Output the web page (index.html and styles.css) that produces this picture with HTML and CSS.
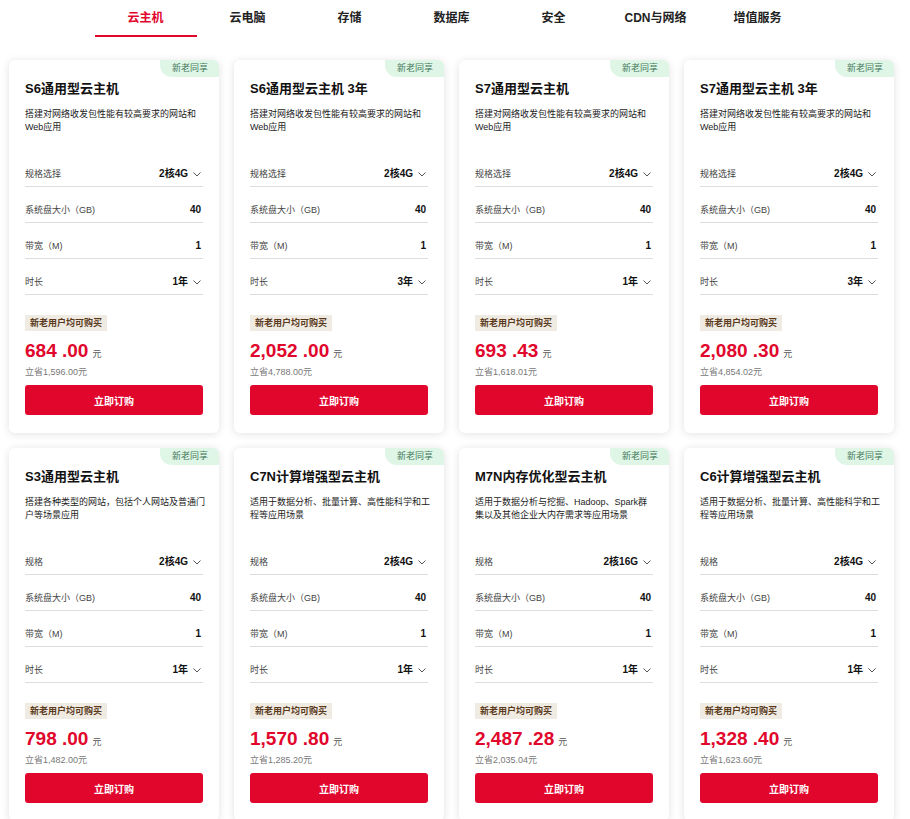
FILE: index.html
```html
<!DOCTYPE html>
<html lang="zh-CN">

<head>
    <meta charset="UTF-8">
    <meta name="viewport" content="width=device-width, initial-scale=1.0">
    <title>云主机</title>
    <link rel="stylesheet" href="styles.css">
</head>

<body>

    <div class="page">
        <div class="tabs">
            <div class="tab active">云主机</div>
            <div class="tab">云电脑</div>
            <div class="tab">存储</div>
            <div class="tab">数据库</div>
            <div class="tab">安全</div>
            <div class="tab">CDN与网络</div>
            <div class="tab">增值服务</div>
        </div>

        <div class="cards" id="cards"></div>
    </div>

    <script>
        var products = [
            { name: 'S6通用型云主机', desc: '搭建对网络收发包性能有较高要求的网站和Web应用', specLabel: '规格选择', spec: '2核4G', time: '1年', price: '684', cents: '.00', save: '1,596.00' },
            { name: 'S6通用型云主机 3年', desc: '搭建对网络收发包性能有较高要求的网站和Web应用', specLabel: '规格选择', spec: '2核4G', time: '3年', price: '2,052', cents: '.00', save: '4,788.00' },
            { name: 'S7通用型云主机', desc: '搭建对网络收发包性能有较高要求的网站和Web应用', specLabel: '规格选择', spec: '2核4G', time: '1年', price: '693', cents: '.43', save: '1,618.01' },
            { name: 'S7通用型云主机 3年', desc: '搭建对网络收发包性能有较高要求的网站和Web应用', specLabel: '规格选择', spec: '2核4G', time: '3年', price: '2,080', cents: '.30', save: '4,854.02' },
            { name: 'S3通用型云主机', desc: '搭建各种类型的网站，包括个人网站及普通门户等场景应用', specLabel: '规格', spec: '2核4G', time: '1年', price: '798', cents: '.00', save: '1,482.00' },
            { name: 'C7N计算增强型云主机', desc: '适用于数据分析、批量计算、高性能科学和工程等应用场景', specLabel: '规格', spec: '2核4G', time: '1年', price: '1,570', cents: '.80', save: '1,285.20' },
            { name: 'M7N内存优化型云主机', desc: '适用于数据分析与挖掘、Hadoop、Spark群集以及其他企业大内存需求等应用场景', specLabel: '规格', spec: '2核16G', time: '1年', price: '2,487', cents: '.28', save: '2,035.04' },
            { name: 'C6计算增强型云主机', desc: '适用于数据分析、批量计算、高性能科学和工程等应用场景', specLabel: '规格', spec: '2核4G', time: '1年', price: '1,328', cents: '.40', save: '1,623.60' }
        ];

        var chevron = '<svg class="chevron" width="8" height="5" viewBox="0 0 8 5"><path d="M0.5 0.5 L4 4 L7.5 0.5" fill="none" stroke="#555" stroke-width="1"/></svg>';

        var html = '';
        products.forEach(function (p) {
            html += '<div class="card">' +
                '<div class="badge">新老同享</div>' +
                '<div class="card-title">' + p.name + '</div>' +
                '<div class="card-desc">' + p.desc + '</div>' +
                '<div class="spec-row"><span class="label">' + p.specLabel + '</span><span class="value">' + p.spec + chevron + '</span></div>' +
                '<div class="spec-row"><span class="label">系统盘大小（GB)</span><span class="value">40</span></div>' +
                '<div class="spec-row"><span class="label">带宽（M)</span><span class="value">1</span></div>' +
                '<div class="spec-row"><span class="label">时长</span><span class="value">' + p.time + chevron + '</span></div>' +
                '<div class="tag">新老用户均可购买</div>' +
                '<div class="price"><span class="amount">' + p.price + ' ' + p.cents + '</span><span class="unit">元</span></div>' +
                '<div class="save">立省' + p.save + '元</div>' +
                '<button class="buy">立即订购</button>' +
                '</div>';
        });
        document.getElementById('cards').innerHTML = html;
    </script>

</body>

</html>
```

FILE: styles.css
```css
body {
    margin: 0;
    padding: 0;
    background-color: #fff;
    font-family: "Liberation Sans", "Noto Sans CJK SC", sans-serif;
    color: #222;
}

.page {
    width: 885px;
    padding-left: 9px;
}

.tabs {
    display: flex;
    justify-content: center;
    margin-bottom: 23px;
}

.tab {
    width: 102px;
    height: 33px;
    padding-top: 2px;
    line-height: 33px;
    text-align: center;
    font-size: 12px;
    font-weight: 700;
    color: #222;
    border-bottom: 2px solid transparent;
}

.tab.active {
    color: #e1062c;
    border-bottom-color: #e1062c;
}

.cards {
    display: grid;
    grid-template-columns: repeat(4, 210px);
    gap: 15px;
}

.card {
    position: relative;
    padding: 18px 16px 18px 16px;
    background-color: #fff;
    border-radius: 6px;
    box-shadow: 0 1px 8px rgba(0, 0, 0, 0.12);
}

.badge {
    position: absolute;
    top: 0;
    right: 0;
    height: 17px;
    line-height: 17px;
    padding: 0 11px 0 12px;
    font-size: 9px;
    color: #44795b;
    background-color: #dff5e6;
    border-radius: 0 6px 0 12px;
}

.card-title {
    font-size: 13px;
    font-weight: 700;
    line-height: 22px;
    color: #111;
}

.card-desc {
    margin: 8px -2.5px 17px 0;
    height: 26px;
    font-size: 9px;
    line-height: 13px;
    color: #222;
}

.spec-row {
    display: flex;
    justify-content: space-between;
    align-items: center;
    padding: 16px 2px 5px 0;
    line-height: 14px;
    border-bottom: 1px solid #ddd;
}

.label {
    font-size: 9px;
    color: #444;
}

.value {
    display: flex;
    align-items: center;
    font-size: 10px;
    font-weight: 700;
    color: #111;
}

.chevron {
    margin-left: 5px;
}

.tag {
    display: inline-block;
    margin-top: 20px;
    height: 16px;
    line-height: 16px;
    padding: 0 5px;
    font-size: 9px;
    font-weight: 700;
    color: #5a3a1c;
    background-color: #efeae2;
}

.price {
    margin-top: 8px;
    height: 24px;
    line-height: 24px;
    color: #e1062c;
}

.amount {
    font-size: 19px;
    font-weight: 700;
}

.unit {
    margin-left: 4px;
    font-size: 9px;
    color: #555;
}

.save {
    margin-top: 2px;
    line-height: 14px;
    font-size: 9px;
    color: #777;
}

.buy {
    display: block;
    width: 100%;
    height: 30px;
    margin-top: 6px;
    border: none;
    border-radius: 3px;
    background-color: #e1062c;
    color: #fff;
    font-family: inherit;
    font-size: 10px;
    font-weight: 700;
    cursor: pointer;
}
```
